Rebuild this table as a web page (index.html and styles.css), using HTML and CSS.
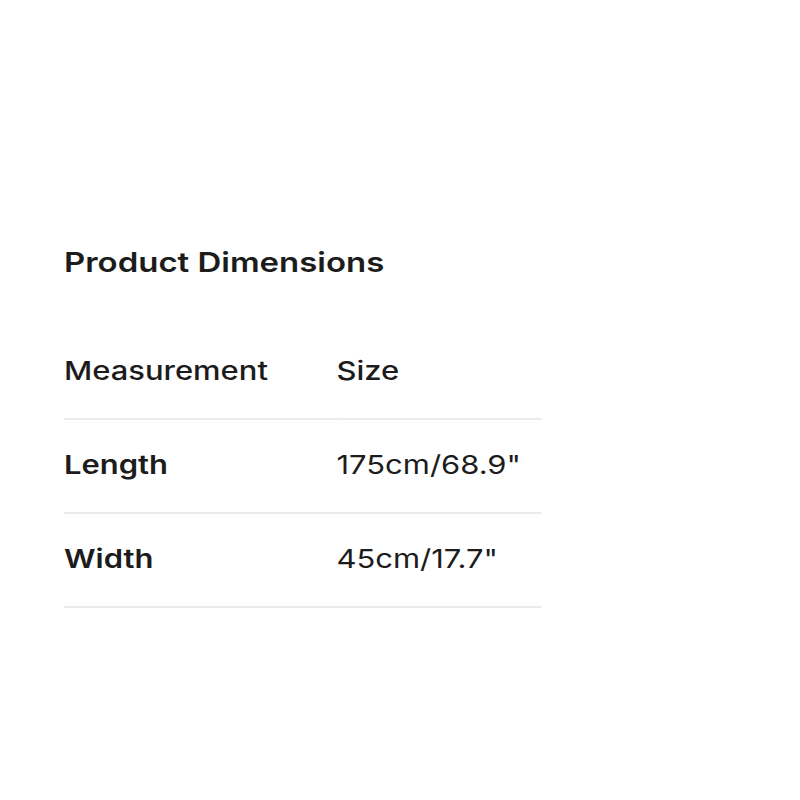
FILE: index.html
```html
<!DOCTYPE html>
<html>
<head>
<meta charset="utf-8">
<link rel="stylesheet" href="styles.css">
</head>
<body>
<section class="dims">
  <h2 class="dims-title">Product Dimensions</h2>
  <table class="dims-table">
    <thead>
      <tr><th class="col-name">Measurement</th><th class="col-size">Size</th></tr>
    </thead>
    <tbody>
      <tr><td class="col-name">Length</td><td class="col-size">175cm/68.9"</td></tr>
      <tr><td class="col-name">Width</td><td class="col-size">45cm/17.7"</td></tr>
    </tbody>
  </table>
</section>
</body>
</html>
```

FILE: styles.css
```css
html, body {
  margin: 0;
  padding: 0;
  background: #ffffff;
}
body {
  font-family: Inter, "Noto Sans", sans-serif;
  color: #1c1c1c;
}
.dims {
  margin-left: 64px;
  padding-top: 246px;
  width: 401px;
  transform: scaleX(1.19);
  transform-origin: 0 0;
}
.dims-title {
  margin: 0;
  font-size: 27.7px;
  font-weight: 600;
  line-height: 32px;
  color: #1c1c1c;
}
.dims-table {
  margin-top: 48px;
  width: 401px;
  border-collapse: collapse;
}
.dims-table th,
.dims-table td {
  text-align: left;
  padding: 29px 0 31px;
  font-size: 26px;
  line-height: 32px;
  border-bottom: 2px solid #ebebeb;
}
.dims-table th {
  font-weight: 500;
}
.col-name { width: 229px; }
.dims-table td.col-name { font-weight: 600; }
.dims-table td.col-size { font-weight: 400; }
```
